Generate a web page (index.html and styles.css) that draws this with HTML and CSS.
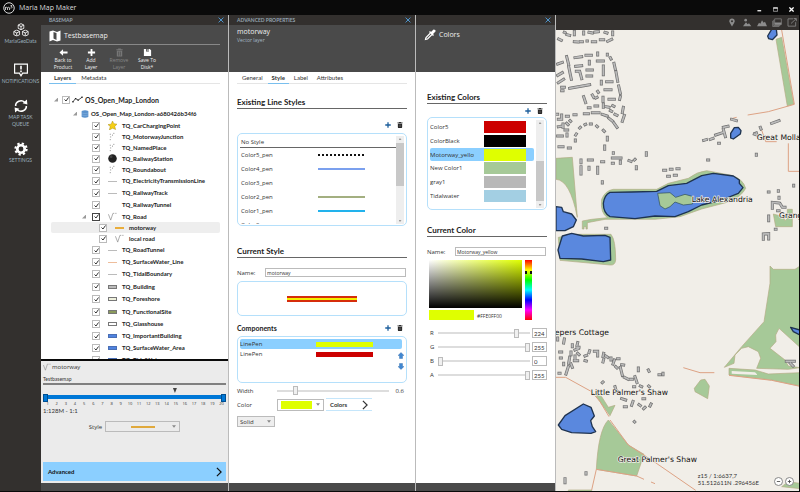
FILE: index.html
```html
<!DOCTYPE html>
<html lang="en">
<head>
  <meta charset="UTF-8">
  <meta name="viewport" content="width=device-width, initial-scale=1">
  <title>Maria Map Maker</title>
  <link rel="stylesheet" href="styles.css">
</head>
<body>
  <!-- Shared icons -->
  <svg class="defs" aria-hidden="true">
    <symbol id="i-close" viewBox="0 0 10 10"><path d="M1 1L9 9M9 1L1 9" fill="none" stroke="currentColor" stroke-width="1.6"/></symbol>
    <symbol id="i-plus" viewBox="0 0 12 12"><path d="M6 0.500V11.500M0.500 6H11.500" fill="none" stroke="currentColor" stroke-width="2.600"/></symbol>
    <symbol id="i-trash" viewBox="0 0 12 14"><path d="M4 0H8V1H12V3H0V1H4ZM1 4H11V12L10 14H2L1 12Z" fill="currentColor"/><path d="M4 6V12M6 6V12M8 6V12" stroke="#888" stroke-width=".8"/></symbol>
    <symbol id="i-chevron" viewBox="0 0 10 16"><path d="M1.500 1L8.500 8L1.500 15" fill="none" stroke="currentColor" stroke-width="2"/></symbol>
    <symbol id="i-dots" viewBox="0 0 20 20"><path d="M4 5h2M12 3h2M5 11h2M4 17h2M9 7h2" stroke="#777" stroke-width="2"/></symbol>
    <symbol id="i-star" viewBox="0 0 20 20"><path d="M10 0L13 6L20 7L15 12L17 19L10 16L3 20L5 12L0 8L7 7Z" fill="#f5cf14" stroke="#a88a10"/></symbol>
    <symbol id="i-ball" viewBox="0 0 20 20"><circle cx="10" cy="10" r="9.500" fill="#222"/><circle cx="7" cy="6" r="3" fill="#444"/></symbol>
    <symbol id="i-root" viewBox="0 0 20 20"><path d="M1 5l5 13L11 3h3M16 3h3" fill="none" stroke="#888" stroke-width="1.500"/></symbol>
    <symbol id="i-cube" viewBox="0 0 12 12"><path d="M1 3.500L6 1L11 3.500V9L6 11.500L1 9ZM1 3.500L6 6L11 3.500M6 6V11" fill="none" stroke="currentColor" stroke-width="1.500"/></symbol>
    <symbol id="i-arrow" viewBox="0 0 12 12"><path d="M6 0L12 6H9V12H3V6H0Z" fill="#3f87d2" stroke="#2b67a8" stroke-width=".8"/></symbol>
  </svg>

  <div class="app">
    <header class="titlebar">
      <svg class="logo" viewBox="0 0 24 24"><circle cx="12" cy="12" r="10.500" fill="none" stroke="#eee" stroke-width="1.800"/><path d="M5 16v-6M5 12q3-4 4 0v4M9 12q3-4 4 0v4M15 7h3l-2 2q3 0 2 2t-3 1" fill="none" stroke="#eee" stroke-width="1.500"/></svg>
      <h1>Maria Map Maker</h1>
      <div class="window-buttons">
        <button aria-label="Minimize"><svg viewBox="0 0 12 12"><path d="M1 9H10" stroke="#fff" stroke-width="3"/></svg></button>
        <button aria-label="Maximize"><svg viewBox="0 0 14 12"><path d="M1 1H13V11H1Z" fill="none" stroke="#fff" stroke-width="1.500"/><path d="M1 2H13" stroke="#fff" stroke-width="3"/></svg></button>
        <button aria-label="Close"><svg viewBox="0 0 12 12"><path d="M1 1L11 11M11 1L1 11" stroke="#fff" stroke-width="3"/></svg></button>
      </div>
    </header>

    <nav class="sidebar">
      <a class="data" href="#data">
        <svg viewBox="0 0 30 26"><use href="#i-cube" x="8" y="0" width="14" height="13"/><use href="#i-cube" x="0" y="12" width="14" height="13"/><use href="#i-cube" x="16" y="12" width="14" height="13"/></svg>
        <span>MariaGeoData</span>
      </a>
      <a href="#notifications">
        <svg viewBox="0 0 30 26"><path d="M3 2H27V19H18L15 24L12 19H3Z" fill="none" stroke="currentColor" stroke-width="2.200"/><path d="M15 5V12M15 14V17" stroke="currentColor" stroke-width="3"/></svg>
        <span>NOTIFICATIONS</span>
      </a>
      <a href="#queue">
        <svg viewBox="0 0 30 26"><path d="M5 13A10 9 0 0 1 22 6M25 13A10 9 0 0 1 8 20" fill="none" stroke="currentColor" stroke-width="3"/><path d="M18 8L27 10L26 1ZM12 18L3 16L4 25Z" fill="currentColor"/></svg>
        <span>MAP TASK<br>QUEUE</span>
      </a>
      <a href="#settings">
        <svg viewBox="0 0 30 26"><circle cx="15" cy="13" r="7" fill="none" stroke="currentColor" stroke-width="5"/><circle cx="15" cy="13" r="10.500" fill="none" stroke="currentColor" stroke-width="4" stroke-dasharray="4.250 4"/></svg>
        <span>SETTINGS</span>
      </a>
    </nav>

    <!-- Basemap -->
    <section class="panel basemap">
      <div class="panel-bar"><span>BASEMAP</span><button aria-label="Close basemap"><svg><use href="#i-close"/></svg></button></div>
      <div class="panel-head">
        <div class="head-title">
          <svg viewBox="0 0 24 24"><path d="M1 3L8 1L16 4L23 1V21L16 23L8 20L1 23Z" fill="#fff"/><path d="M9 4L15 6V20L9 17Z" fill="#4a4a4a"/></svg>
          <h2>Testbasemap</h2>
        </div>
        <div class="tools">
          <button><svg viewBox="0 0 20 20"><path d="M1 10L9 3V8H19V12H9V17Z" fill="#fff"/></svg>Back to<br>Product</button>
          <button><svg viewBox="0 0 20 20"><path d="M10 2V18M2 10H18" stroke="#fff" stroke-width="4"/></svg>Add<br>Layer</button>
          <button disabled><svg viewBox="0 0 20 20"><path d="M7 1H13V3H17V5H3V3H7ZM4 6H16V19H4Z" fill="#777"/><path d="M8 8V17M12 8V17" stroke="#4a4a4a" stroke-width="1.500"/></svg>Remove<br>Layer</button>
          <button><svg viewBox="0 0 20 20"><path d="M2 2H15L18 5V18H2Z" fill="#fff"/><path d="M7 2H13V8H7Z" fill="#4a4a4a"/><path d="M10 3H12V7H10Z" fill="#fff"/></svg>Save To<br>Disk*</button>
        </div>
      </div>
      <div class="panel-body">
        <div class="tabs">
          <button class="active">Layers</button>
          <button>Metadata</button>
        </div>
        <ul class="tree">
          <li class="root"><i class="twisty"></i><label><input type="checkbox" checked><svg viewBox="0 0 34 20"><path d="M3 17L11 7L19 12L31 3" fill="none" stroke="#222" stroke-width="2.500"/><path d="M1 15h4v4h-4zM9 5h4v4h-4zM17 10h4v4h-4zM29 1h4v4h-4z" fill="#222"/></svg>OS_Open_Map_London</label></li>
          <li class="source"><i class="twisty"></i><svg viewBox="0 0 24 24"><path d="M2 3Q12 -1 22 3V21Q12 26 2 21Z" fill="#5b92cd"/><path d="M2 9Q12 13 22 9M2 15Q12 19 22 15" fill="none" stroke="#8cb6e2" stroke-width="1.500"/></svg>OS_Open_Map_London-a680426b34f6</li>
          <li class="point"><label><input type="checkbox" checked><svg><use href="#i-star"/></svg>TQ_CarChargingPoint</label></li>
          <li class="point"><label><input type="checkbox" checked><svg><use href="#i-dots"/></svg>TQ_MotorwayJunction</label></li>
          <li class="point"><label><input type="checkbox" checked><svg><use href="#i-dots"/></svg>TQ_NamedPlace</label></li>
          <li class="point"><label><input type="checkbox" checked><svg><use href="#i-ball"/></svg>TQ_RailwayStation</label></li>
          <li class="point"><label><input type="checkbox" checked><svg><use href="#i-dots"/></svg>TQ_Roundabout</label></li>
          <li><label><input type="checkbox" checked><i class="line"></i>TQ_ElectricityTransmissionLine</label></li>
          <li><label><input type="checkbox" checked><i class="line"></i>TQ_RailwayTrack</label></li>
          <li><label><input type="checkbox" checked><i class="line none"></i>TQ_RailwayTunnel</label></li>
          <li class="road"><i class="twisty"></i><label><input type="checkbox" checked><svg><use href="#i-root"/></svg>TQ_Road</label></li>
          <li class="sub selected"><label><input type="checkbox" checked><i class="line gold"></i>motorway</label></li>
          <li class="sub"><label><input type="checkbox" checked><svg><use href="#i-root"/></svg>local road</label></li>
          <li><label><input type="checkbox" checked><i class="line"></i>TQ_RoadTunnel</label></li>
          <li><label><input type="checkbox" checked><i class="line peach"></i>TQ_SurfaceWater_Line</label></li>
          <li><label><input type="checkbox" checked><i class="line"></i>TQ_TidalBoundary</label></li>
          <li class="site"><label><input type="checkbox" checked><i class="area gray"></i>TQ_Building</label></li>
          <li><label><input type="checkbox" checked><i class="area cream"></i>TQ_Foreshore</label></li>
          <li class="site"><label><input type="checkbox" checked><i class="area olive"></i>TQ_FunctionalSite</label></li>
          <li><label><input type="checkbox" checked><i class="area"></i>TQ_Glasshouse</label></li>
          <li><label><input type="checkbox" checked><i class="area blue"></i>TQ_ImportantBuilding</label></li>
          <li><label><input type="checkbox" checked><i class="area blue"></i>TQ_SurfaceWater_Area</label></li>
          <li><label><input type="checkbox" checked><i class="area blue"></i>TQ_TidalWater</label></li>
        </ul>
      </div>
      <div class="layer-detail">
        <div class="layer-name"><svg><use href="#i-root"/></svg>motorway</div>
        <div class="layer-source">Testbasemap</div>
        <div class="zoom-marker"></div>
        <div class="zoom-range">
          <input type="range" min="1" max="20" value="1" aria-label="Minimum zoom">
          <input type="range" min="1" max="20" value="20" aria-label="Maximum zoom">
        </div>
        <ol class="ticks"><li>1</li><li>2</li><li>3</li><li>4</li><li>5</li><li>6</li><li>7</li><li>8</li><li>9</li><li>10</li><li>11</li><li>12</li><li>13</li><li>14</li><li>15</li><li>16</li><li>17</li><li>18</li><li>19</li><li>20</li></ol>
        <div class="scale">1:128M - 1:1</div>
        <div class="style-row"><label for="layerStyle">Style</label><select id="layerStyle"><option></option></select></div>
        <button class="advanced">Advanced<svg><use href="#i-chevron"/></svg></button>
      </div>
      <div class="panel-foot"></div>
    </section>

    <!-- Advanced properties -->
    <section class="panel properties">
      <div class="panel-bar"><span>ADVANCED PROPERTIES</span><button aria-label="Close properties"><svg><use href="#i-close"/></svg></button></div>
      <div class="panel-head">
        <h2>motorway</h2>
        <p>Vector layer</p>
      </div>
      <div class="panel-body">
        <div class="tabs">
          <button>General</button>
          <button class="active">Style</button>
          <button>Label</button>
          <button>Attributes</button>
        </div>
        <h3>Existing Line Styles</h3>
        <div class="actions"><button aria-label="Add style"><svg><use href="#i-plus"/></svg></button><button class="remove" aria-label="Delete style"><svg><use href="#i-trash"/></svg></button></div>
        <div class="box list-box">
          <ul class="pens">
            <li class="no-style">No Style</li>
            <li>Color5_pen<i class="pen dotted"></i></li>
            <li>Color4_pen<i class="pen blue"></i></li>
            <li>Color3_pen</li>
            <li>Color2_pen<i class="pen olive"></i></li>
            <li>Color1_pen<i class="pen cyan"></i></li>
            <li>Color0_pen<i class="pen peach"></i></li>
          </ul>
          <div class="scrollbar"><i class="up"></i><b></b><i class="down"></i></div>
        </div>
        <h3>Current Style</h3>
        <div class="name-row"><label for="styleName">Name:</label><input type="text" id="styleName" value="motorway"></div>
        <div class="box preview"><i></i></div>
        <div class="components-head">
          <h4>Components</h4>
          <div class="actions"><button aria-label="Add component"><svg><use href="#i-plus"/></svg></button><button class="remove" aria-label="Delete component"><svg><use href="#i-trash"/></svg></button></div>
        </div>
        <div class="box components">
          <ul>
            <li class="selected">LinePen<i class="yellow"></i></li>
            <li>LinePen<i class="red"></i></li>
          </ul>
          <div class="movers">
            <button aria-label="Move up"><svg><use href="#i-arrow"/></svg></button>
            <button class="down" aria-label="Move down"><svg><use href="#i-arrow"/></svg></button>
          </div>
        </div>
        <div class="width-row"><label for="penWidth">Width</label><input type="range" id="penWidth" min="0" max="4" step="0.1" value="0.6"><output>0.6</output></div>
        <div class="color-row"><label for="penColor">Color</label><select id="penColor"><option></option></select><button class="colors">Colors<svg><use href="#i-chevron"/></svg></button></div>
        <select class="dash" aria-label="Line pattern"><option>Solid</option></select>
      </div>
      <div class="panel-foot"></div>
    </section>

    <!-- Colors -->
    <section class="panel palette">
      <div class="panel-bar"><span></span><button aria-label="Close colors"><svg><use href="#i-close"/></svg></button></div>
      <div class="panel-head">
        <div class="head-title">
          <svg viewBox="0 0 24 24"><path d="M13 8L4 17L3 21L7 20L16 11" fill="none" stroke="#fff" stroke-width="2.400"/><path d="M10 6L18 14L20 12L18 10L23 5Q24 1 19 1L14 6L12 4Z" fill="#fff"/></svg>
          <h2>Colors</h2>
        </div>
      </div>
      <div class="panel-body">
        <h3>Existing Colors</h3>
        <div class="actions"><button aria-label="Add color"><svg><use href="#i-plus"/></svg></button><button class="remove" aria-label="Delete color"><svg><use href="#i-trash"/></svg></button></div>
        <div class="box list-box">
          <ul class="swatches">
            <li><span>Color5</span><i class="red"></i></li>
            <li><span>ColorBlack</span><i class="black"></i></li>
            <li class="selected"><span>Motorway_yellow</span><i class="yellow"></i></li>
            <li><span>New Color1</span><i class="green"></i></li>
            <li><span>gray1</span><i class="gray"></i></li>
            <li><span>Tidalwater</span><i class="water"></i></li>
          </ul>
          <div class="scrollbar low"><i class="up"></i><b></b><i class="down"></i></div>
        </div>
        <h3>Current Color</h3>
        <div class="name-row"><label for="colorName">Name:</label><input type="text" id="colorName" value="Motorway_yellow"></div>
        <div class="picker">
          <div class="shade"></div>
          <input type="range" class="hue" min="0" max="360" value="67" aria-label="Hue">
          <div class="hex"><i></i>#FFE0FF00</div>
        </div>
        <div class="channel"><label for="r">R</label><input type="range" id="r" max="255" value="224"><input type="text" value="224" aria-label="Red value"></div>
        <div class="channel"><label for="g">G</label><input type="range" id="g" max="255" value="255"><input type="text" value="255" aria-label="Green value"></div>
        <div class="channel"><label for="b">B</label><input type="range" id="b" max="255" value="0"><input type="text" value="0" aria-label="Blue value"></div>
        <div class="channel"><label for="a">A</label><input type="range" id="a" max="255" value="255"><input type="text" value="255" aria-label="Alpha value"></div>
      </div>
      <div class="panel-foot"></div>
    </section>

    <!-- Map -->
    <main class="map">
      <div class="map-tools">
        <button aria-label="Place"><svg viewBox="0 0 30 26"><path d="M15 25Q7 14 7 9A8 8 0 0 1 23 9Q23 14 15 25Z" fill="#8c8c8c"/><circle cx="15" cy="9" r="3" fill="#33302e"/></svg></button>
        <button aria-label="Terrain"><svg viewBox="0 0 30 26"><path d="M3 24L12 12L17 18L21 15L28 24Z" fill="#8c8c8c"/><circle cx="11" cy="6" r="4" fill="#8c8c8c"/></svg></button>
        <button aria-label="Elevation"><svg viewBox="0 0 30 26"><path d="M0 24L6 14L10 17L15 6L20 14L24 11L30 24Z" fill="#8c8c8c"/></svg></button>
        <button aria-label="Layers"><svg viewBox="0 0 30 26"><path d="M8 2H28V19H8ZM5 5V22H25M2 8V25H22" fill="none" stroke="#8c8c8c" stroke-width="2"/><path d="M8 13H28V19H8Z" fill="#8c8c8c"/></svg></button>
        <button aria-label="Pop out"><svg viewBox="0 0 30 26"><path d="M18 2H3V24H26V12M12 16L27 2M20 1H28V9" fill="none" stroke="#8c8c8c" stroke-width="2.400"/></svg></button>
      </div>
      <div class="map-view">
        <svg viewBox="3 90 732 1383" preserveAspectRatio="xMinYMin slice">
          <g class="green">
            <path d="M3 475L52 472L67 652Q45 540 3 538Z"/>
            <path d="M175 568Q150 572 140 598Q135 640 158 653L110 658L82 663V687H87V680H93V687H97V668L150 658L300 658L375 650L440 627L520 606Q560 590 572 565Q565 538 530 526L455 512Q425 515 400 535L340 550L305 568Z"/>
            <path d="M10 712L60 703L168 703Q182 720 182 780Q180 797 165 795L15 781Z"/>
            <path d="M663 118L680 112L716 312L697 318Z"/>
            <path d="M655 642L684 650L690 662L697 655V628H712V680H662Z"/>
            <path d="M645 798L655 808H720L735 798V1042L672 985L662 1005L663 1025L645 1045L690 1080L700 1098L735 1103L700 1108L605 1105L617 1075L610 1055L580 1040L560 1045L540 1065L537 1090L508 1102L560 1040L627 965L645 850Z"/>
            <path d="M522 1105L600 1110L640 1122L735 1118V1158L650 1140L522 1125Z"/>
            <path d="M418 1165L437 1140L450 1138L463 1158L458 1196L420 1175Z"/>
            <path d="M120 1182L140 1190L160 1222L180 1216L165 1247L135 1205Z"/>
            <path d="M160 1260L220 1335L267 1363L245 1428L124 1408Q130 1290 160 1260Z"/>
            <path d="M40 1470H110V1476H40ZM680 1460L700 1445L735 1450V1466Z"/>
          </g>
          <path class="paper" d="M530 1113L600 1117L608 1125L530 1121Z"/>
          <g class="lakes">
            <path d="M165 577L230 576L305 574L340 557L395 550L440 527L475 520L535 528L553 540L553 550L564 563L550 580L500 600L440 615L400 635L360 650L300 648L240 656L165 650Q145 640 145 610Q148 585 165 577Z"/>
            <path d="M3 620L20 622L25 635L50 642L64 660L55 680L30 692H3Z"/>
            <path d="M22 708L50 700L85 708L150 706L165 712L167 780L145 785L80 777L15 775L9 750Z"/>
            <path d="M638 108L650 88H664L666 105L652 119L641 116Z"/>
            <path d="M527 400L538 383L550 382L558 392L556 402L535 417L527 414Z"/>
            <path d="M85 1212L108 1222L118 1248L107 1262L112 1280L122 1295L108 1300L50 1298L20 1288L10 1275L30 1247Z"/>
            <path d="M707 982L735 990V1005L715 995Z"/>
          </g>
          <path class="island" d="M308 580L345 578L362 592L390 583L415 590L412 612L385 615L360 606L345 620L330 627L315 617Z"/>
          <path class="track" d="M680 90L718 313L640 335L578 345M525 357L545 352M618 385L632 425L665 425M700 430V514H735M385 1103L435 1118H478M3 1132H32L110 1175L135 1205L162 1250M165 1260L220 1335L300 1387L422 1471M110 1470L124 1408L245 1428L267 1438M288 1446L300 1451M522 1126L650 1141L735 1159"/>
          <defs>
            <path id="houses" d="M11 117l8 4M28 97l2 1M36 104l8 2M58 94v10M70 126l-12-1M76 125l6 0M86 96v6M102 97l10 2M120 96l10-1M96 123l1 0M112 125h10M136 119h10M150 97l6 2M173 96v8M158 124l12-6
              M8 192l14-5M8 226l14-8M10 248l16-10M35 170l6 24M41 200l8 38M60 173l20-3M93 166h16M128 159v6M157 163v2M166 173l2 4M127 183h18M103 184v8M62 199l18-2M96 210h16M64 214h10l6 22M96 228h14M145 198v26M177 190l4 18M183 216l5 28M191 258l5 22M139 244v8M155 245h16M44 265l60-11M20 262h8M20 272h4M150 269h18M128 274l2 3M112 285l4 7M196 290l-2 8M86 290l6 18M122 294l4-2M144 292v12M162 298h16M145 312v10M100 323h5M120 318h8M152 320l10 2M173 317l4 2M205 322l-3 16M208 346l-6 18M180 343l6 3M166 332l4 2
              M4 343h4M20 345v8M34 349h6M57 344h6M88 341h12M112 338h20M142 343l14 5M162 355l10 8M176 368l10 14M10 358h10M45 362l2 2M10 380l12-2M24 372v10M35 370l4 4M30 390h8M8 408h14M36 402v6M90 374l2-1M106 372h3M125 378l2 2M145 391l3 3M157 412v8M74 384l2-2M64 402l-2 3M61 420v3M149 438v10M12 440h12M40 444h6M175 458v2M78 480v8M78 500v22M100 480h12M102 502v6M128 502v16M128 510v10M140 485h6M172 474h26M172 490h3M196 484v6M222 482l6 2M240 478l-2 2M244 500v6M274 458v8M274 462v4M142 545v4M152 685h3M458 480h3M326 511h6M346 508h5M366 506h6M338 529h5M358 526h6
              M446 421l8-2M466 418l8-3M482 405l24-8M505 388l6 22M505 382l14-3M530 358l14 4M491 430h2M598 402l8 3l-2-6M616 382l2 5M650 370l22-8M604 463v3M640 576h2M670 572v2M652 625v-18l20 2M672 592v3M676 612l6 10h8M668 632h4M641 648v14M661 688h2M625 718v-16l16-1v16M716 556v2
              M8 1014v6M28 1017l-2 12M52 1034v6M68 1028l-2 8M60 1050l10-4M14 1056h6M16 1074h3M26 1090v4M44 1072l-3 18M48 1092l4 10M40 1100l-7 22M60 1068v8M58 1082h10M68 1060l4 4M66 1042h6M48 1056v8M90 1068l5-2M90 1082l4 1M104 1052l-2 6M118 1054h10v14M146 1060l-2 10M146 1078l-2 8M152 1068l6 4M168 1074v6M178 1080l-4 12M188 1076h4M200 1094l6 1M182 1100l4 4M196 1102l6 24M208 1132l12 6M226 1138h6M240 1130l6 18M236 1160h3M250 1104v8M280 1110l2 4M312 1124h4M324 1120v4M256 1158l4 2M281 1158l2 2M142 1148l2-2M180 1160l4 14M200 1196l12 4M208 1220h6M234 1204l-4 12M252 1214l4 3M264 1196h5M270 1222l-4 4M288 1212l-3 6M238 1265l1 1M12 1120h3M30 1436v12M30 1440v8M93 1418v4M694 1084h24M706 1090l8 8"/>
          </defs>
          <use href="#houses" class="wall"/>
          <use href="#houses" class="roof"/>
          <g class="place">
            <text x="605" y="420">Great Mollands</text>
            <text x="410" y="606">Lake Alexandria</text>
            <text x="672" y="654">Grange</text>
            <text x="162" y="1006" text-anchor="end">Keepers Cottage</text>
            <text x="107" y="1185">Little Palmer's Shaw</text>
            <text x="188" y="1385">Great Palmer's Shaw</text>
          </g>
        </svg>
        <div class="map-status">
          <p>z15 / 1:6637,7<br>51.512611N .296456E</p>
          <button aria-label="Zoom out"><svg viewBox="0 0 12 12"><path d="M2 6H10" stroke="#444" stroke-width="2"/></svg></button>
          <button aria-label="Zoom in"><svg viewBox="0 0 12 12"><path d="M2 6H10M6 2V10" stroke="#444" stroke-width="2"/></svg></button>
        </div>
      </div>
    </main>
  </div>
</body>
</html>
```
FILE: styles.css
```css
*, *::before, *::after { margin: 0; padding: 0; box-sizing: border-box; }
body {
  font-family: 'Open Sans', 'Noto Sans', sans-serif;
  font-size: 6px;
  line-height: 8px;
  color: #333;
  background: #0a0a0a;
}
button, input, select {
  font: inherit;
  color: inherit;
  background: none;
  border: none;
  border-radius: 0;
  appearance: none;
  min-width: 0;
}
button { cursor: pointer; }
ul, ol { list-style: none; }
a { color: inherit; text-decoration: none; }
svg { display: block; flex: none; }
.defs { position: absolute; width: 0; height: 0; }

.app {
  display: grid;
  grid-template-columns: 41px 187px 187px 140px 1fr;
  grid-template-rows: 15px 1fr;
  height: 100vh;
  padding: 0 1px 1px 0;
}

/* Title bar */
.titlebar {
  grid-column: 1 / -1;
  display: flex;
  align-items: center;
  gap: 4px;
  padding: 0 3px;
  color: #ddd;
}
.titlebar h1 {
  font-size: 7px;
  font-weight: 400;
}
.logo { width: 12px; height: 12px; }
.window-buttons {
  display: flex;
  gap: 11px;
  margin-left: auto;
  padding: 3px 2px 0 0;
}
.window-buttons svg { width: 5px; height: 5px; }

/* Sidebar */
.sidebar {
  display: flex;
  flex-direction: column;
  gap: 14px;
  padding-top: 8px;
  background: #33302e;
  color: #9db0bf;
  font-family: Lato, sans-serif;
  font-size: 5px;
  line-height: 7px;
  text-align: center;
}
.sidebar a {
  display: flex;
  flex-direction: column;
  align-items: center;
  gap: 1px;
}
.sidebar .data { margin-bottom: 4px; }
.sidebar svg { width: 16px; height: 14px; color: #fff; }

/* Panels */
.panel {
  display: flex;
  flex-direction: column;
  min-height: 0;
  background: #fff;
}
.properties, .palette { border-left: 1px solid #bbb; }
.panel-bar {
  display: flex;
  align-items: center;
  justify-content: space-between;
  height: 10px;
  padding: 0 4px 0 8px;
  background: #33302e;
  color: #93a3b0;
  font-family: Lato, sans-serif;
  font-size: 5px;
  font-weight: 700;
}
.panel-bar svg { width: 6px; height: 6px; color: #4f9bd5; }
.panel-head {
  height: 47px;
  padding: 3px 8px 0;
  background: #4a4a4a;
  color: #eee;
}
.panel-head h2 { font-size: 7px; font-weight: 400; }
.panel-head p { color: #a5b8c6; font-size: 5px; }
.panel-foot { height: 8px; background: #4a4a4a; }
.panel-body {
  flex: 1;
  min-height: 0;
  overflow: hidden;
}
.head-title {
  display: flex;
  align-items: center;
  gap: 3px;
  height: 14px;
}
.head-title svg { width: 12px; height: 12px; }
.basemap .head-title { height: 17px; border-bottom: 1px solid #888; }
.tools {
  display: flex;
  padding-top: 3px;
}
.tools button {
  width: 28px;
  font-size: 5px;
  line-height: 7px;
}
.tools button:disabled { color: #888; }
.tools svg { width: 9px; height: 9px; margin: 0 auto; }

.tabs {
  display: flex;
  height: 12px;
  margin: 0 8px;
  border-bottom: 1px solid #e5e5e5;
}
.tabs button {
  height: 12px;
  padding: 0 5px;
  font-family: Lato, sans-serif;
}
.tabs .active {
  font-weight: 700;
  border-bottom: 1px solid #79bfee;
}

/* Layer tree */
.tree {
  padding: 8px 8px 0 10px;
  color: #222;
  font-family: Lato, sans-serif;
  font-weight: 700;
}
.tree li {
  display: flex;
  align-items: center;
  height: 12px;
  padding-left: 41px;
}
.tree label { display: flex; align-items: center; }
.tree svg, .tree .line, .tree .area { width: 9px; margin: 0 5px 0 8px; }
.tree svg { height: 9px; }
.tree input {
  width: 8px;
  height: 8px;
  border: 1px solid #bbb;
  background: #fff url("data:image/svg+xml,%3Csvg xmlns='http://www.w3.org/2000/svg' viewBox='0 0 10 10'%3E%3Cpath d='M1 5L4 8L9 1' fill='none' stroke='%23333' stroke-width='2'/%3E%3C/svg%3E") center / 5px 5px no-repeat;
}
.tree .twisty {
  width: 4px;
  height: 4px;
  background: #999;
  clip-path: polygon(100% 0, 100% 100%, 0 100%);
}
.tree .root { height: 15px; padding-left: 3px; font-size: 7px; }
.tree .root input { margin-left: 4px; }
.tree .root svg { width: 11px; height: 7px; margin: 0 2px; }
.tree .source { height: 13px; padding-left: 22px; }
.tree .source svg { width: 8px; height: 8px; margin: 0 2px 0 4px; }
.tree .point, .tree .road, .tree .sub { height: 11px; }
.tree .site { height: 13px; }
.tree .road { padding-left: 31px; }
.tree .road .twisty { margin-right: 6px; }
.tree .road input { border-color: #444; }
.tree .sub { padding-left: 48px; }
.tree .selected { background: #eee; }
.line { height: 1px; background: #bbb; }
.line.none { background: none; }
.line.gold { height: 2px; background: #e9ad3b; }
.line.peach { background: #eebd9b; }
.area { height: 4px; border: 1px solid #777; background: #fff; }
.area.gray { background: #bbb; }
.area.cream { background: #eef0dc; }
.area.olive { background: #8b9b5c; }
.area.blue { background: #4f83e0; border-color: #4a6fb5; }

/* Selected layer */
.layer-detail {
  height: 124px;
  padding: 0 2px;
  border-top: 2px solid #0a0a0a;
  background: #ebebeb;
}
.layer-name {
  display: flex;
  gap: 1px;
  height: 15px;
  padding-top: 2px;
}
.layer-name svg { width: 8px; height: 8px; }
.layer-source {
  border-bottom: 2px solid #808080;
  font-family: Lato, sans-serif;
  font-size: 5px;
  line-height: 7px;
}
.zoom-marker {
  width: 4px;
  height: 5px;
  margin: 3px 0 0 71%;
  background: #444;
  clip-path: polygon(0 0, 100% 0, 50% 100%);
}
.zoom-range {
  display: grid;
  height: 8px;
  background: linear-gradient(#0078d7, #0078d7) center / 100% 4px no-repeat;
}
.zoom-range input {
  grid-area: 1 / 1;
  width: 100%;
  height: 8px;
  pointer-events: none;
}
.zoom-range input::-webkit-slider-thumb {
  appearance: none;
  width: 5px;
  height: 8px;
  border: 1px solid #004f91;
  background: #0078d7;
  pointer-events: auto;
}
.ticks {
  display: grid;
  grid-template-columns: repeat(20, 1fr);
  font-size: 4px;
  line-height: 6px;
  text-align: center;
}
.scale { line-height: 8px; font-family: Lato, sans-serif; }
.style-row {
  display: flex;
  align-items: center;
  justify-content: center;
  gap: 3px;
  padding: 6px 0 30px;
}
select {
  border: 1px solid #bbb;
  --arrow: url("data:image/svg+xml,%3Csvg xmlns='http://www.w3.org/2000/svg' viewBox='0 0 8 5'%3E%3Cpath d='M0 0H8L4 5Z' fill='%23888'/%3E%3C/svg%3E") right 3px center / 4px 3px no-repeat;
  background: var(--arrow), #eee;
}
#layerStyle {
  width: 75px;
  height: 11px;
  background: var(--arrow), linear-gradient(#e0a93c, #e0a93c) center / 24px 2px no-repeat;
}
.advanced {
  display: flex;
  align-items: center;
  justify-content: space-between;
  width: 100%;
  height: 19px;
  padding: 0 4px 0 5px;
  background: #8bcfff;
  color: #111;
  font-family: Lato, sans-serif;
  font-weight: 700;
}
.advanced svg, .colors svg { width: 6px; height: 10px; }

/* Properties and palette */
.properties .tabs { gap: 1px; padding-left: 1px; }
.properties .tabs button { padding: 0 4px; }
h3 {
  margin: 0 8px;
  border-bottom: 1px solid #666;
  color: #222;
  font-family: Lato, sans-serif;
  font-size: 8px;
  line-height: 11px;
}
.properties .tabs + h3 { margin-top: 13px; }
.box + h3 { margin-top: 20px; }
.palette .box + h3 { margin-top: 15px; }
.palette .panel-body { padding: 20px 0 0 3px; }
.actions {
  display: flex;
  justify-content: flex-end;
  align-items: center;
  gap: 6px;
  height: 24px;
  padding: 8px 12px 0 0;
}
.palette .actions { height: 13px; padding-top: 0; }
.actions button { color: #1d5f9c; }
.actions .remove { color: #222; }
.actions svg { width: 6px; height: 6px; }
.box {
  margin: 0 8px;
  border: 1px solid #b5e0fb;
  border-radius: 5px;
}
.list-box {
  display: flex;
  height: 93px;
  padding: 2px 2px 1px;
}
.pens, .swatches { flex: 1; overflow: hidden; }
.pens li {
  display: grid;
  grid-template-columns: 77px 47px;
  align-items: center;
  height: 14px;
  padding-left: 1px;
}
.pens .no-style {
  height: 12px;
  border-bottom: 1px solid #666;
}
.pen { height: 2px; }
.pen.dotted { background: repeating-linear-gradient(90deg, #111 0 2px, transparent 2px 4px); }
.pen.blue { background: #7ba0ee; }
.pen.olive { background: #a3af80; }
.pen.cyan { background: #22b2ec; }
.pen.peach { background: #f0b08a; }
.scrollbar {
  display: flex;
  flex-direction: column;
  align-items: center;
  width: 8px;
  padding: 2px 0;
  background: #eee;
}
.scrollbar b { width: 8px; height: 43px; margin: 3px 0 auto; background: #c8c8c8; }
.scrollbar i { width: 3px; height: 2px; background: #999; }
.scrollbar .up { clip-path: polygon(50% 0, 100% 100%, 0 100%); }
.scrollbar .down { clip-path: polygon(0 0, 100% 0, 50% 100%); }
.scrollbar.low b { height: 40px; margin: auto 0 3px; }

input[type="text"] {
  height: 9px;
  border: 1px solid #bbb;
  background: #fff;
  font-size: 5px;
  padding-left: 1px;
}
.name-row {
  display: grid;
  grid-template-columns: 28px 1fr;
  align-items: center;
  margin: 10px 9px 4px 8px;
}
.preview { display: grid; place-items: center; height: 35px; }
.preview i {
  width: 70px;
  height: 6px;
  border: solid #d62d0b;
  border-width: 2px 0;
  background: #f4f000;
}
.components-head {
  display: flex;
  align-items: center;
  justify-content: space-between;
  height: 20px;
  padding: 4px 0 0 8px;
}
.components-head .actions { padding-top: 0; }
h4 { color: #222; font-family: Lato, sans-serif; font-size: 7px; }
.components { display: flex; height: 47px; padding: 2px; }
.components ul { flex: 1; }
.components li {
  display: grid;
  grid-template-columns: 76px 57px;
  align-items: center;
  height: 10px;
}
.components li i { height: 5px; }
.components .selected { margin-right: -4px; }
.movers { align-self: start; width: 6px; margin: 11px 0 0; }
.movers button { display: block; height: 11px; }
.movers svg { width: 6px; height: 7px; }
.movers .down svg { transform: rotate(180deg); }
.selected { border-radius: 2px; background: #8bcfff; }
.yellow { background: #dfff00; }
.red { background: #cc0000; }
.black { background: #000; }
.swatches .green { background: #a6c998; }
.swatches .gray { background: #b8b8b8; }
.water { background: #a3cfe3; }

input[type="range"] { height: 9px; }
input[type="range"]::-webkit-slider-thumb { appearance: none; }
.width-row input, .channel input[type="range"] {
  width: 100%;
  background: linear-gradient(#ddd, #ddd) center / 100% 2px no-repeat;
}
.width-row input::-webkit-slider-thumb, .channel input::-webkit-slider-thumb {
  width: 5px;
  height: 9px;
  border: 1px solid #bbb;
  background: #f0f0f0;
}
.width-row {
  display: grid;
  grid-template-columns: 40px 112px 1fr;
  align-items: center;
  height: 15px;
  margin: 0 11px 0 8px;
}
.width-row output { text-align: right; }
.color-row {
  display: grid;
  grid-template-columns: 39px 47px 47px;
  column-gap: 1px;
  align-items: center;
  margin: 0 8px 5px;
}
.color-row .colors { margin-left: 1px; }
#penColor {
  height: 12px;
  background: var(--arrow), linear-gradient(#dfff00, #dfff00) 3px center / 31px 8px no-repeat;
}
.colors {
  display: flex;
  align-items: center;
  justify-content: space-between;
  height: 13px;
  padding: 0 4px;
  border: solid #c5e6fb;
  border-width: 1px 0;
  font-family: Lato, sans-serif;
  font-weight: 700;
}
.dash {
  display: block;
  width: 38px;
  height: 11px;
  margin-left: 8px;
  padding-left: 2px;
}

/* Color list */
.swatches { margin-right: 2px; }
.swatches li {
  display: grid;
  grid-template-columns: 44px 42px;
  column-gap: 10px;
  align-items: center;
  height: 14px;
}
.swatches .selected { height: 13px; }
.swatches span { overflow: hidden; white-space: nowrap; }
.swatches i { height: 12px; }

.picker {
  display: grid;
  grid-template-columns: 1fr 7px;
  grid-template-rows: 48px 12px;
  column-gap: 3px;
  margin: 0 23px 6px 10px;
}
.shade { background: linear-gradient(transparent, #000), linear-gradient(90deg, #fff, #dfff00); }
.picker .hue {
  grid-area: 1 / 2 / 3 / 3;
  writing-mode: vertical-lr;
  width: 7px;
  height: 60px;
  background: linear-gradient(#f00, #ff0, #0f0, #0ff, #00f, #f0f, #f00);
}
.hue::-webkit-slider-thumb {
  width: 7px;
  height: 3px;
  border: solid #111;
  border-width: 0 2px;
}
.hex {
  display: flex;
  align-items: end;
  gap: 3px;
  font-size: 5px;
}
.hex i { width: 45px; height: 10px; background: #dfff00; }
.channel {
  display: grid;
  grid-template-columns: 6px 92px 15px;
  align-items: center;
  height: 14px;
  margin-left: 11px;
  column-gap: 2px;
}
.channel input[type="text"] { height: 10px; font-family: Lato, sans-serif; font-size: 6px; }

/* Map */
.map {
  display: flex;
  flex-direction: column;
  min-width: 0;
  min-height: 0;
  border-left: 1px solid #bbb;
}
.map-tools {
  display: flex;
  justify-content: flex-end;
  align-items: center;
  gap: 5px;
  height: 15px;
  padding-right: 2px;
  background: #33302e;
}
.map-tools svg { width: 10px; height: 9px; }
.map-view {
  position: relative;
  flex: 1;
  min-height: 0;
  overflow: hidden;
  background: #f1eee8;
}
.map-view > svg { width: 100%; height: 100%; }
.green path { fill: #a6c998; stroke: #b3ab83; stroke-width: 2; }
.lakes path { fill: #5a88de; stroke: #1f3350; stroke-width: 4; stroke-linejoin: round; }
.paper { fill: #f1eee8; }
.island { fill: #a6c998; stroke: #2c4a55; stroke-width: 2; }
.track { fill: none; stroke: #dda284; stroke-width: 3; }
.wall, .roof { fill: none; stroke-linecap: square; }
.wall { stroke: #6e6e6e; stroke-width: 9; }
.roof { stroke: #bbb; stroke-width: 5; }
.place text {
  font-family: 'DejaVu Sans', sans-serif;
  font-size: 23px;
  fill: #111;
  stroke: #f1eee8;
  stroke-width: 4;
  paint-order: stroke;
}
.map-status {
  position: absolute;
  right: 5px;
  bottom: 5px;
  display: flex;
  align-items: end;
  gap: 2px;
}
.map-status p { margin-right: 13px; font-family: Lato, sans-serif; line-height: 7px; }
.map-status button {
  width: 9px;
  height: 9px;
  padding: 1px;
  border: 1px solid #888;
  border-radius: 50%;
  background: #fff;
}
```
